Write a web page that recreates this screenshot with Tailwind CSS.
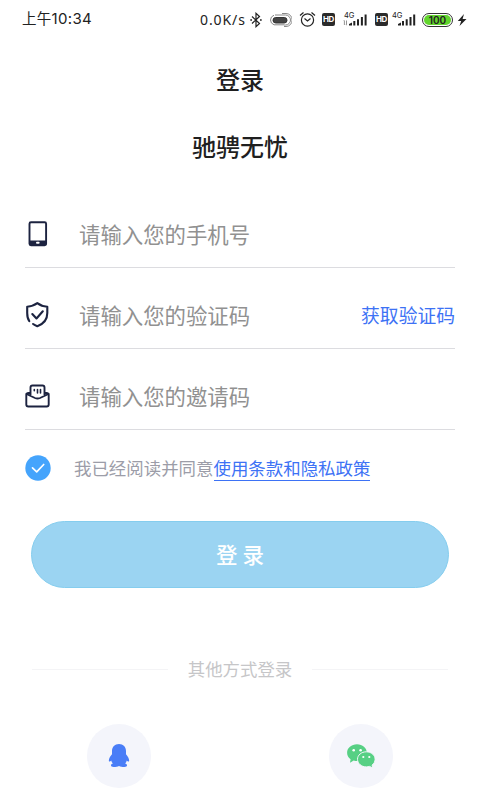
<!DOCTYPE html>
<html lang="zh-CN">
<head>
    <meta charset="UTF-8">
    <meta name="viewport" content="width=device-width, initial-scale=1.0">
    <title>登录</title>
    <script src="https://cdn.jsdelivr.net/npm/@tailwindcss/browser@4"></script>
</head>
<body class="bg-white h-[800px] overflow-hidden font-['Noto_Sans_CJK_SC',sans-serif]">

    <!-- Status Bar -->
    <header class="h-[39px] flex items-center pl-[22px] pr-[13px] text-[#222]">
        <span class="text-[14.500px] whitespace-nowrap w-[178px] shrink-0 tracking-[0.3px] font-['Inter','Noto_Sans_CJK_SC',sans-serif]">上午<span class="text-[15px]">10:34</span></span>
        <span class="text-[14px] w-[49px] shrink-0 whitespace-nowrap tracking-[0.9px] font-['Noto_Sans',sans-serif]">0.0K/s</span>
        <svg class="w-[14px] h-[16px] shrink-0" viewBox="0 0 14 16" fill="none" stroke="currentColor" stroke-width="1.2">
            <path d="M3 4.500l7.500 7L7 14.700V1.300l3.500 3.200L3 11.500"/>
            <path d="M1.300 8h1.700M11 8h1.700" stroke-width="1.600"/>
        </svg>
        <svg class="w-[22px] h-[14px] ml-[7px] shrink-0" viewBox="0 0 22 14" fill="none" stroke-width="1">
            <rect x="3" y="4.500" width="14" height="5.500" rx="2.700" fill="#444" stroke="#333"/>
            <path d="M5 2H15.500a5 5 0 0 1 0 10H14M4 2.200Q.5 3.500 .5 7T4 11.800h10M12 .5h4a6 6.300 0 0 1 0 13h-2" stroke="#888"/>
        </svg>
        <svg class="w-[17px] h-[17px] ml-[7px] shrink-0" viewBox="0 0 17 17" fill="none" stroke="currentColor" stroke-width="1.200">
            <circle cx="8.500" cy="9" r="6.100"/>
            <path d="M1 4.500L4.500 1.500M16 4.500L12.500 1.500M5.500 7.500l3 2.500 3-2.500"/>
        </svg>
        <span class="w-[13px] h-[13px] ml-[6px] shrink-0 rounded-[2px] bg-[#2b2b2b] text-white text-[8px] leading-[13px] font-bold text-center tracking-[-0.3px] font-['Inter',sans-serif]">HD</span>
        <svg class="w-[26px] h-[16px] ml-[7px] shrink-0" viewBox="0 0 26 16" fill="currentColor">
            <text x="2" y="6" font-size="7.500" font-family="Inter, sans-serif">4G</text>
            <path d="M1.200 9l1-1 .6 1v4h-.9V9zM4 8.500h.9v4l-.6 1-.8-1H4z" fill="#888"/>
            <path d="M7 13.500v-1.500l3-1.500v3zM11.300 13.500v-4.500h2v4.500zM15 13.500V7.300h2v6.200zM18.900 13.500V5h2v8.500zM22.600 13.500V2.500h2v11z"/>
        </svg>
        <span class="w-[13px] h-[13px] ml-[7px] shrink-0 rounded-[2px] bg-[#2b2b2b] text-white text-[8px] leading-[13px] font-bold text-center tracking-[-0.3px] font-['Inter',sans-serif]">HD</span>
        <svg class="w-[26px] h-[16px] ml-[3px] shrink-0" viewBox="0 0 26 16" fill="currentColor">
            <text x="1" y="6" font-size="7.500" font-family="Inter, sans-serif">4G</text>
            <path d="M7 13.500v-1.500l3-1.500v3zM11 13.500v-4.500h2v4.500zM14.700 13.500V7.300h2v6.200zM18.500 13.500V5h2v8.500zM22.200 13.500V2.500h2v11z"/>
        </svg>
        <span class="w-[31px] h-[14px] ml-[5px] shrink-0 rounded-full border border-[#333] p-[1px]">
            <span class="block h-[10px] rounded-full bg-[#62d52d] text-[10px] leading-[10px] text-center font-semibold font-['Inter',sans-serif]">100</span>
        </span>
        <svg class="w-[10px] h-[14px] ml-[4px] shrink-0" viewBox="0 0 10 14" fill="currentColor">
            <path d="M7 1L.8 8h3.400L2.500 13 9.500 6H5.600z"/>
        </svg>
    </header>

    <!-- Titles -->
    <h1 class="mt-[22px] text-[24px] leading-[36px] font-medium text-center text-[#1f1f1f]">登录</h1>
    <h2 class="mt-[31px] text-[24px] leading-[36px] font-medium text-center text-[#1f1f1f]">驰骋无忧</h2>

    <!-- Login Form -->
    <main class="mt-[23px] px-[25px]">
        <div class="h-[81px] pt-[13px] flex items-center border-b border-[#dcdce0]">
            <svg class="w-[25px] h-[28px]" viewBox="0 0 25 28">
                <rect x="4.500" y="2.200" width="16.600" height="23" rx="1.500" fill="white" stroke="#1c2340" stroke-width="1.900"/>
                <path d="M4.500 20.500h17v4.500h-17z" fill="#1c2340"/>
                <rect x="11" y="21.800" width="3.600" height="2" rx="1" fill="white"/>
            </svg>
            <span class="ml-[29px] text-[21.400px] leading-[32px] text-[#919191]">请输入您的手机号</span>
        </div>
        <div class="h-[81px] pt-[13px] flex items-center border-b border-[#dcdce0]">
            <svg class="w-[25px] h-[28px]" viewBox="0 0 25 28" fill="none" stroke="#1c2340" stroke-width="2.100" stroke-linecap="round" stroke-linejoin="round">
                <path d="M4.300 20.200C2.500 17.800 2.200 15 2.200 12V5.700C6 5.500 9.500 4.300 12.300 2.200 15 4.300 18.500 5.500 22.300 5.700V12c0 7-3.300 10.800-10 13.200-1.600-.6-3-1.300-4.200-2.200"/>
                <path d="M7.300 13l4.200 4.500 6.300-7.200"/>
            </svg>
            <span class="ml-[29px] text-[21.400px] leading-[32px] text-[#919191]">请输入您的验证码</span>
            <a href="#" class="ml-auto text-[18.800px] leading-[28px] text-[#3d72f5]">获取验证码</a>
        </div>
        <div class="h-[81px] pt-[13px] flex items-center border-b border-[#dcdce0]">
            <svg class="w-[25px] h-[28px]" viewBox="0 0 25 28" fill="none" stroke="#1c2340" stroke-width="1.900" stroke-linecap="round" stroke-linejoin="round">
                <path d="M5 11H3.500A2.200 2.200 0 0 0 1.300 13v9.500a2 2 0 0 0 2 2h18.400a2 2 0 0 0 2-2V13a2.200 2.200 0 0 0-2.200-2H20"/>
                <path d="M1.500 12l8.500 4q2.500 1.100 5 0l8.500-4M5.500 13V5.500a2 2 0 0 1 2-2h10a2 2 0 0 1 2 2V13"/>
                <path d="M9.300 7.500v1.300M12.500 7.500v3.500M15.500 7.500v3.500" stroke-width="1.600"/>
            </svg>
            <span class="ml-[29px] text-[21.400px] leading-[32px] text-[#919191]">请输入您的邀请码</span>
        </div>

        <!-- Agreement -->
        <div class="mt-[24px] h-[28px] flex items-center text-[17.450px] leading-[26px]">
            <svg class="w-[26px] h-[26px]" viewBox="0 0 26 26" fill="none">
                <circle cx="13" cy="13" r="12.700" fill="#45a4fc"/>
                <path d="M7.500 12.800l4.200 4 7-7.300" stroke="white" stroke-width="1.700" stroke-linecap="round" stroke-linejoin="round"/>
            </svg>
            <span class="ml-[23px] text-[#9c9da8]">我已经阅读并同意</span>
            <a href="#" class="h-[26px] leading-[26px] border-b border-[#3d72f5] text-[#3d72f5]">使用条款和隐私政策</a>
        </div>

        <button class="block mt-[39px] mx-[6px] w-[418px] h-[67px] rounded-full border border-[#85cdee] bg-[#9bd4f2] text-white text-[21.500px] font-medium">登 录</button>
    </main>

    <!-- Other login methods -->
    <section class="mt-[68px] px-[32px]">
        <div class="flex items-center gap-[20px]">
            <span class="flex-1 h-px bg-[#f4f4f6]"></span>
            <span class="text-[17.400px] leading-[26px] text-[#c6c6c8]">其他方式登录</span>
            <span class="flex-1 h-px bg-[#f4f4f6]"></span>
        </div>
        <div class="mt-[42px] flex justify-between px-[55px]">
            <a href="#" class="w-[64px] h-[64px] rounded-full bg-[#f4f5fb] flex items-center justify-center">
                <svg class="w-[22px] h-[26px]" viewBox="0 0 22 26" fill="#497df7">
                    <path d="M11 1C6.700 1 4 4.100 4 8v3.300C2.100 13.500.3 16.500 1 18.300c.4.700 1.500 0 2.200-.9.300 1.300.9 2.200 1.700 3C2 21.300 2.500 24 5.600 24c2.200 0 4-.2 5.400-1 1.400.8 3.200 1 5.400 1 3.100 0 3.600-2.700.7-3.600.8-.8 1.400-1.700 1.700-3 .7.900 1.800 1.600 2.200.9.700-1.800-1.100-4.800-3-7V8c0-3.900-2.700-7-7-7z"/>
                </svg>
            </a>
            <a href="#" class="w-[64px] h-[64px] rounded-full bg-[#f4f5fb] flex items-center justify-center">
                <svg class="w-[30px] h-[26px]" viewBox="0 0 30 26" fill="#57d084">
                    <path d="M11 1.300C5.500 1.300 1.100 5 1.100 9.700c0 2.700 1.300 5 3.500 6.500L4 19.700l3.700-2.100c1.100.4 2.200.5 3.300.5 5.500 0 9.800-3.700 9.800-8.400S16.500 1.300 11 1.300z"/>
                    <path d="M20.300 8.800c-4.900 0-8.800 3.300-8.800 7.500s3.900 7.600 8.800 7.600c1.200 0 2.300-.2 3.300-.5l3.100 1.600-.6-3c1.900-1.400 3-3.300 3-5.700 0-4.200-3.900-7.500-8.800-7.500z" stroke="#f4f5fb" stroke-width="1"/>
                    <g fill="white"><circle cx="7.700" cy="7.300" r="1.300"/><circle cx="14.600" cy="7.300" r="1.300"/><circle cx="17.300" cy="14" r="1.100"/><circle cx="23.300" cy="14" r="1.100"/></g>
                </svg>
            </a>
        </div>
    </section>

</body>
</html>
